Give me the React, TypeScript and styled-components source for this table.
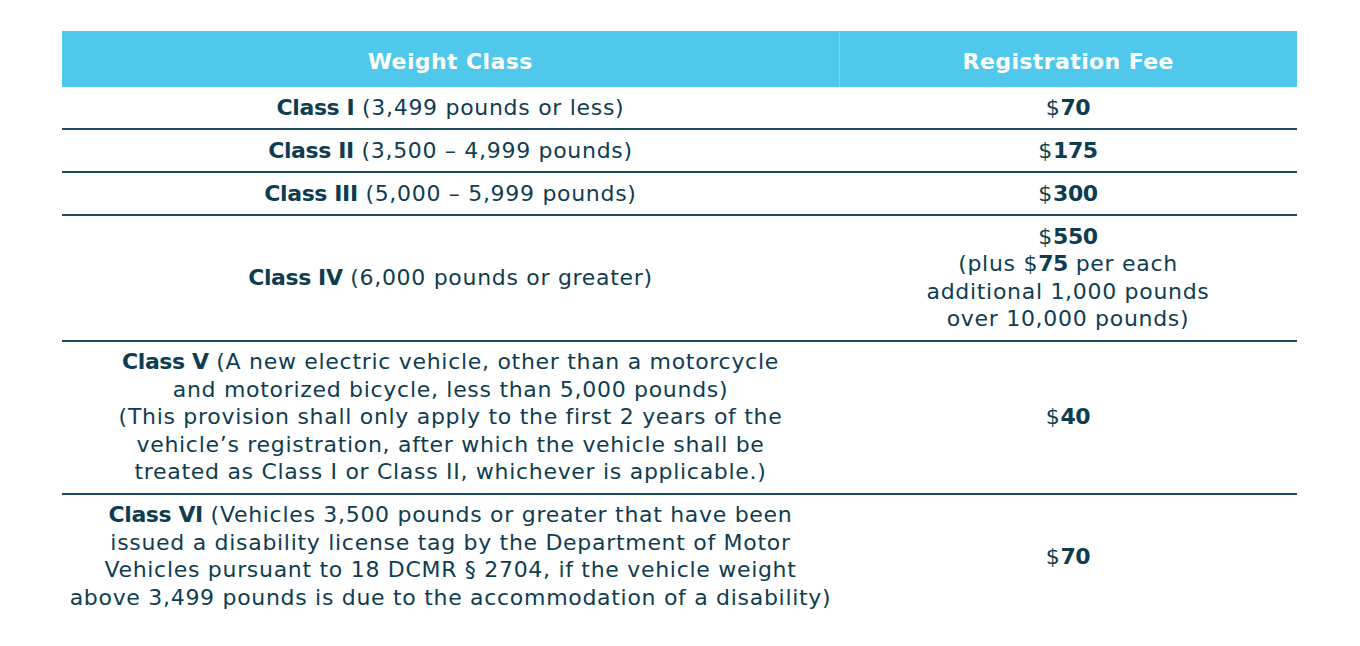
import React from "react";
import styled, { createGlobalStyle } from "styled-components";

const Global = createGlobalStyle`
  html, body { margin: 0; padding: 0; background: #ffffff; }
  body { font-family: "DejaVu Sans", "Noto Sans", sans-serif; color: #0f3d50; }
`;

const Page = styled.div`
  padding: 31px 63px 20px 62px;
`;

const Table = styled.table`
  width: 1235px;
  border-collapse: collapse;
  table-layout: fixed;
  font-size: 22px;
  line-height: 27.5px;
  letter-spacing: 0.7px;
`;

const HeadCell = styled.th<{ $divider?: boolean }>`
  background: #50c8eb;
  color: #ffffff;
  height: 52px;
  padding: 4px 0 0;
  font-weight: 700;
  font-size: 22px;
  line-height: 27px;
  letter-spacing: 0.4px;
  text-align: center;
  vertical-align: middle;
  border-left: ${(p) => (p.$divider ? "1px solid #7dd6f0" : "none")};
`;

const Row = styled.tr<{ $last?: boolean }>`
  border-bottom: ${(p) => (p.$last ? "none" : "2px solid #1c4a5e")};
`;

const Cell = styled.td`
  padding: 6.75px 0;
  text-align: center;
  vertical-align: middle;
  color: #0f3d50;
`;

const B = styled.b`
  font-weight: 700;
  letter-spacing: -0.4px;
`;

type RowData = { label: React.ReactNode; fee: React.ReactNode };

const rows: RowData[] = [
  {
    label: (
      <>
        <B>Class I</B> (3,499 pounds or less)
      </>
    ),
    fee: (
      <>
        $<B>70</B>
      </>
    ),
  },
  {
    label: (
      <>
        <B>Class II</B> (3,500 – 4,999 pounds)
      </>
    ),
    fee: (
      <>
        $<B>175</B>
      </>
    ),
  },
  {
    label: (
      <>
        <B>Class III</B> (5,000 – 5,999 pounds)
      </>
    ),
    fee: (
      <>
        $<B>300</B>
      </>
    ),
  },
  {
    label: (
      <>
        <B>Class IV</B> (6,000 pounds or greater)
      </>
    ),
    fee: (
      <>
        $<B>550</B>
        <br />
        (plus $<B>75</B> per each
        <br />
        additional 1,000 pounds
        <br />
        over 10,000 pounds)
      </>
    ),
  },
  {
    label: (
      <>
        <B>Class V</B> (A new electric vehicle, other than a motorcycle
        <br />
        and motorized bicycle, less than 5,000 pounds)
        <br />
        (This provision shall only apply to the first 2 years of the
        <br />
        vehicle’s registration, after which the vehicle shall be
        <br />
        treated as Class I or Class II, whichever is applicable.)
      </>
    ),
    fee: (
      <>
        $<B>40</B>
      </>
    ),
  },
  {
    label: (
      <>
        <B>Class VI</B> (Vehicles 3,500 pounds or greater that have been
        <br />
        issued a disability license tag by the Department of Motor
        <br />
        Vehicles pursuant to 18 DCMR § 2704, if the vehicle weight
        <br />
        above 3,499 pounds is due to the accommodation of a disability)
      </>
    ),
    fee: (
      <>
        $<B>70</B>
      </>
    ),
  },
];

export default function App() {
  return (
    <>
      <Global />
      <Page>
        <Table>
          <colgroup>
            <col style={{ width: 777 }} />
            <col style={{ width: 458 }} />
          </colgroup>
          <thead>
            <tr>
              <HeadCell>Weight Class</HeadCell>
              <HeadCell $divider>Registration Fee</HeadCell>
            </tr>
          </thead>
          <tbody>
            {rows.map((r, i) => (
              <Row key={i} $last={i === rows.length - 1}>
                <Cell>{r.label}</Cell>
                <Cell>{r.fee}</Cell>
              </Row>
            ))}
          </tbody>
        </Table>
      </Page>
    </>
  );
}
